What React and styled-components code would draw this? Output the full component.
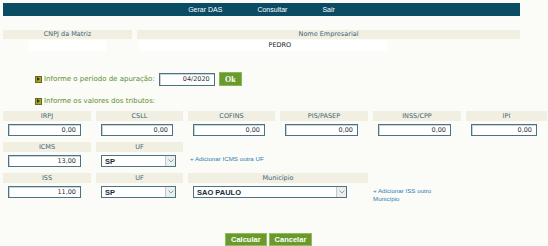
import React from 'react'
import styled, { createGlobalStyle } from 'styled-components'

const Global = createGlobalStyle`
    body {
        margin: 0;
        background: #fbfbf7;
        font-family: "DejaVu Sans", Verdana, sans-serif;
        overflow: hidden;
    }
`

const tributos = ['IRPJ', 'CSLL', 'COFINS', 'PIS/PASEP', 'INSS/CPP', 'IPI']

export default function App () {
    return (
        <Page>
            <Global />
            <TopBar>
                <MenuItem>Gerar DAS</MenuItem>
                <MenuItem>Consultar</MenuItem>
                <MenuItem>Sair</MenuItem>
            </TopBar>

            <HeadRow>
                <HeadCell>CNPJ da Matriz</HeadCell>
                <HeadCell>Nome Empresarial</HeadCell>
            </HeadRow>
            <ValueRow>
                <ValueCell><Blank w={77} /></ValueCell>
                <ValueCell><NameBox>PEDRO</NameBox></ValueCell>
            </ValueRow>

            <PeriodRow>
                <Bullet />
                <GreenText>Informe o período de apuração:</GreenText>
                <PeriodInput defaultValue="04/2020" />
                <OkButton>Ok</OkButton>
            </PeriodRow>

            <TribRow>
                <Bullet />
                <GreenText>Informe os valores dos tributos:</GreenText>
            </TribRow>

            <Grid>
                {tributos.map(t => (
                    <Field key={t}>
                        <Label>{t}</Label>
                        <Cell><MoneyInput defaultValue="0,00" /></Cell>
                    </Field>
                ))}

                <Field>
                    <Label>ICMS</Label>
                    <Cell><MoneyInput defaultValue="13,00" /></Cell>
                </Field>
                <Field>
                    <Label>UF</Label>
                    <Cell><Select value="SP" /></Cell>
                </Field>
                <LinkCell span={4}>
                    <AddLink>+ Adicionar ICMS outra UF</AddLink>
                </LinkCell>

                <Field>
                    <Label>ISS</Label>
                    <Cell><MoneyInput defaultValue="11,00" /></Cell>
                </Field>
                <Field>
                    <Label>UF</Label>
                    <Cell><Select value="SP" /></Cell>
                </Field>
                <Field span={2}>
                    <Label>Município</Label>
                    <Cell><Select value="SAO PAULO" w={154} /></Cell>
                </Field>
                <LinkCell span={2} low>
                    <AddLink narrow>+ Adicionar ISS outro Município</AddLink>
                </LinkCell>
            </Grid>

            <Actions>
                <ActionButton>Calcular</ActionButton>
                <ActionButton>Cancelar</ActionButton>
            </Actions>
        </Page>
    )
}

function Select ({ value, w = 75 }) {
    return (
        <SelectBox w={w}>
            <SelectText>{value}</SelectText>
            <Arrow>
                <svg width="6" height="4" viewBox="0 0 6 4">
                    <path d="M0.5 0.5 L3 3 L5.5 0.5" fill="none" stroke="#7a8a90" strokeWidth="0.8" />
                </svg>
            </Arrow>
        </SelectBox>
    )
}

const Page = styled.div`
    width: 560px;
    padding: 3px 0 0 3px;
`

const TopBar = styled.div`
    width: 517px;
    height: 13px;
    background: #0b4c65;
    display: flex;
    justify-content: center;
    align-items: center;
    gap: 35px;
`

const MenuItem = styled.span`
    color: #ffffff;
    font-family: "Liberation Sans", Arial, sans-serif;
    font-size: 7px;
`

const HeadRow = styled.div`
    display: grid;
    grid-template-columns: 129px 383px;
    column-gap: 5px;
    margin-top: 14px;
`

const HeadCell = styled.div`
    height: 9px;
    background: #f1eee2;
    color: #3f6575;
    font-size: 6.5px;
    line-height: 9px;
    text-align: center;
`

const ValueRow = styled(HeadRow)`
    margin-top: 1px;
    height: 11px;
`

const ValueCell = styled.div`
    display: flex;
    justify-content: center;
`

const Blank = styled.div`
    width: ${p => p.w}px;
    height: 11px;
    background: #ffffff;
`

const NameBox = styled.div`
    width: 248px;
    margin-right: 132px;
    height: 11px;
    background: #ffffff;
    color: #222;
    font-size: 6.5px;
    line-height: 11px;
    padding-left: 130px;
    box-sizing: border-box;
`

const PeriodRow = styled.div`
    display: flex;
    align-items: center;
    margin: 21px 0 0 32px;
    height: 14px;
`

const TribRow = styled(PeriodRow)`
    margin-top: 10px;
    height: 10px;
`

const Bullet = styled.span`
    width: 5px;
    height: 5px;
    background: #a9a72a;
    border: 1px solid #6b6a1a;
    margin-right: 2px;
    position: relative;
    &::after {
        content: '';
        position: absolute;
        left: 1px;
        top: 0.5px;
        border-left: 3px solid #2e2e10;
        border-top: 2px solid transparent;
        border-bottom: 2px solid transparent;
    }
`

const GreenText = styled.span`
    color: #5a8f2e;
    font-size: 7px;
`

const inputBase = `
    box-sizing: border-box;
    height: 12px;
    border: 1px solid #4d7383;
    box-shadow: inset 1px 1px 0 #c9d4d8;
    background: #ffffff;
    font-family: "DejaVu Sans", Verdana, sans-serif;
    font-size: 6.5px;
    color: #333;
    text-align: right;
    padding: 0 4px;
    outline: none;
`

const PeriodInput = styled.input`
    ${inputBase}
    width: 56px;
    height: 13px;
    margin-left: 4px;
`

const OkButton = styled.button`
    margin-left: 4px;
    width: 23px;
    height: 14px;
    padding: 0;
    background: #6a9a2b;
    border: 1px solid #8db55a;
    color: #fff;
    font-family: "Liberation Serif", "Times New Roman", serif;
    font-weight: bold;
    font-size: 8px;
`

const Grid = styled.div`
    display: grid;
    grid-template-columns: 88px 87px 87px 88px 88px 81px;
    column-gap: 5px;
    row-gap: 6px;
    margin-top: 5px;
`

const Field = styled.div`
    display: flex;
    flex-direction: column;
    grid-column: span ${p => p.span || 1};
`

const Label = styled.div`
    height: 10px;
    background: #f1eee2;
    color: #3f6575;
    font-size: 6.5px;
    line-height: 10px;
    text-align: center;
`

const Cell = styled.div`
    padding: 3px 0 0 5px;
    height: 12px;
    display: flex;
`

const MoneyInput = styled.input`
    ${inputBase}
    width: calc(100% - 10px);
`

const SelectBox = styled.div`
    box-sizing: border-box;
    width: ${p => p.w}px;
    height: 12px;
    border: 1px solid #4d7383;
    background: #ffffff;
    display: flex;
    align-items: center;
    justify-content: space-between;
`

const SelectText = styled.span`
    font-family: "Liberation Sans", Arial, sans-serif;
    font-weight: bold;
    font-size: 7.5px;
    color: #1b2a36;
    padding-left: 3px;
`

const Arrow = styled.span`
    width: 9px;
    height: 10px;
    background: #eceeee;
    border-left: 1px solid #c4cacc;
    display: flex;
    align-items: center;
    justify-content: center;
`

const LinkCell = styled.div`
    grid-column: span ${p => p.span};
    padding-top: ${p => (p.low ? '14px' : '13px')};
`

const AddLink = styled.span`
    display: block;
    width: ${p => (p.narrow ? '72px' : 'auto')};
    color: #2e7cb5;
    font-family: "Liberation Sans", Arial, sans-serif;
    font-size: 6.2px;
    line-height: 8px;
    padding-left: ${p => (p.narrow ? '0' : '2px')};
`

const Actions = styled.div`
    display: flex;
    gap: 2px;
    margin: 30px 0 0 222px;
`

const ActionButton = styled.button`
    height: 13px;
    padding: 0 5px;
    background: #6a9a2b;
    border: 1px solid #94bb62;
    color: #fff;
    font-family: "Liberation Sans", Arial, sans-serif;
    font-weight: bold;
    font-size: 7.5px;
    line-height: 11px;
`
